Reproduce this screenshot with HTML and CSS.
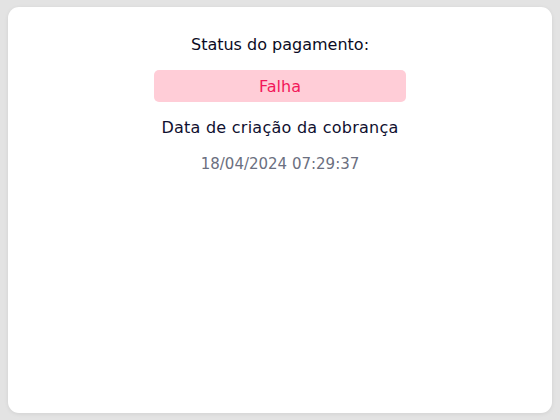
FILE: index.html
```html
<!DOCTYPE html>
<html lang="pt-BR">
<head>
<meta charset="utf-8">
<title>Status do pagamento</title>
<link rel="stylesheet" href="styles.css">
</head>
<body>
<main class="card">
  <p class="label">Status do pagamento:</p>
  <div class="badge">Falha</div>
  <p class="label created">Data de criação da cobrança</p>
  <p class="date">18/04/2024 07:29:37</p>
</main>
</body>
</html>
```
FILE: styles.css
```css
html, body {
  margin: 0;
  height: 100%;
}
body {
  background: #e3e3e3;
  padding: 7px 8px;
  box-sizing: border-box;
  font-family: "DejaVu Sans", "Open Sans", sans-serif;
}
.card {
  background: #ffffff;
  border-radius: 11px;
  height: 406px;
  box-shadow: 0 1px 4px rgba(0, 0, 0, 0.08);
  display: flex;
  flex-direction: column;
  align-items: center;
  padding-top: 27px;
  box-sizing: border-box;
}
.label {
  margin: 0;
  font-size: 16px;
  line-height: 22px;
  color: #0b0b24;
}
.badge {
  margin-top: 14px;
  width: 252px;
  height: 32px;
  border-radius: 5px;
  background: #ffcdd7;
  color: #f2175a;
  font-size: 16px;
  display: flex;
  align-items: center;
  justify-content: center;
}
.created {
  margin-top: 15px;
  color: #101030;
  letter-spacing: 0.25px;
}
.date {
  margin: 14px 0 0;
  font-size: 15px;
  line-height: 22px;
  color: #6b6f80;
}
```
